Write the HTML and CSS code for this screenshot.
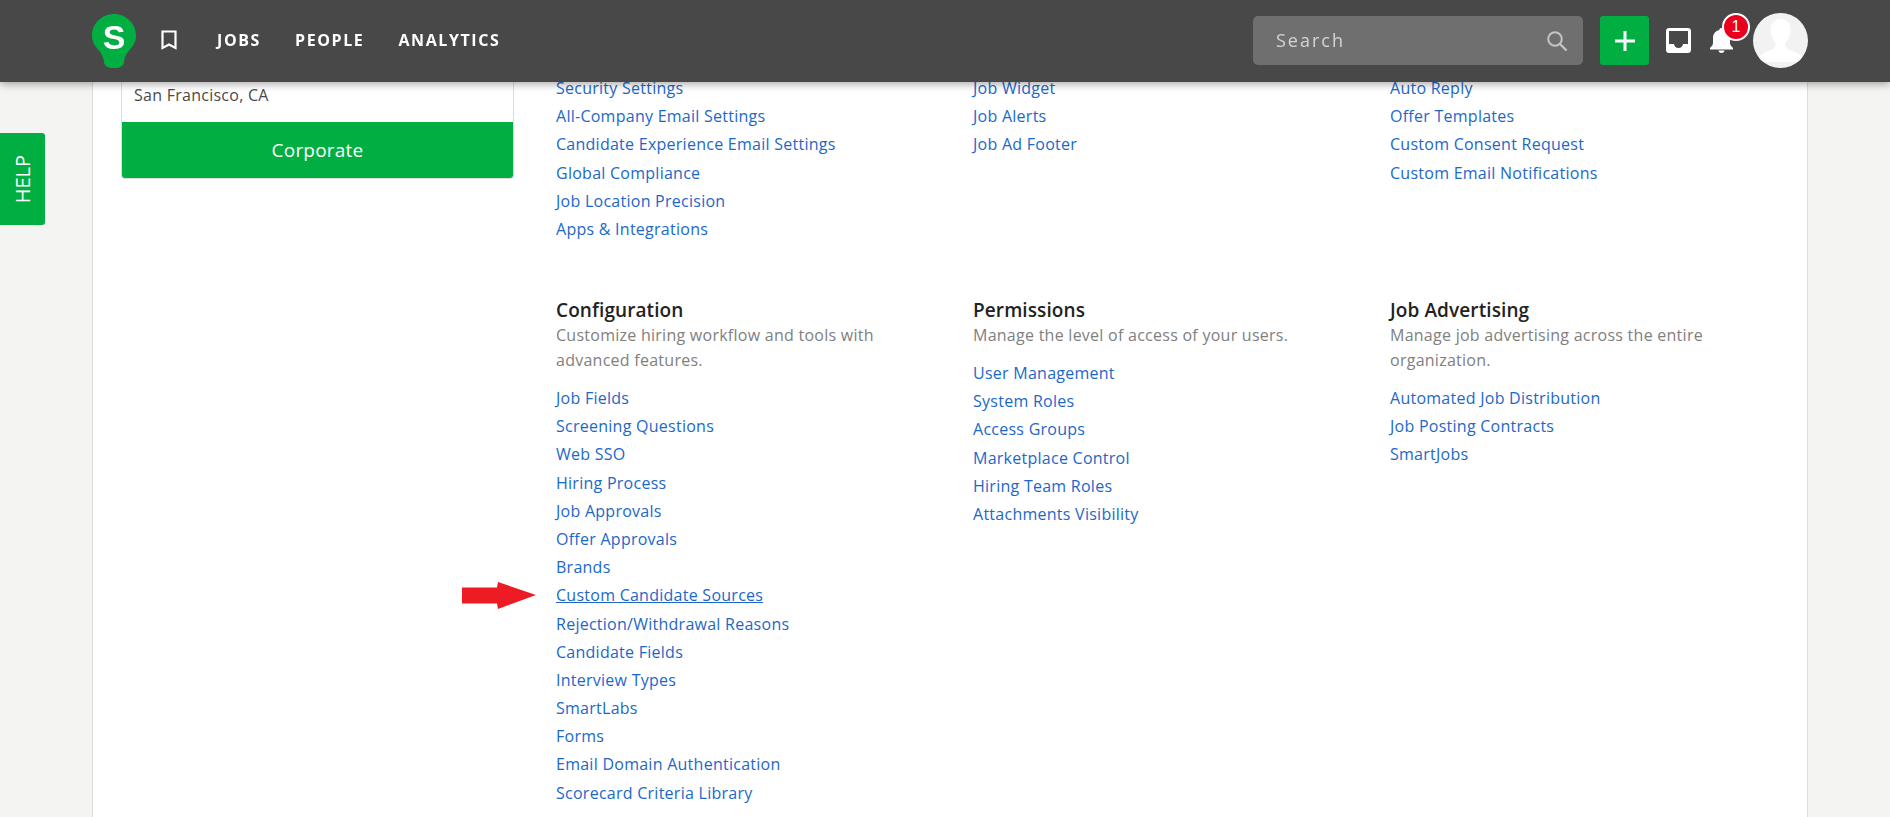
FILE: index.html
```html
<!DOCTYPE html>
<html lang="en">
<head>
<meta charset="utf-8">
<title>Settings</title>
<link rel="stylesheet" href="styles.css">
</head>
<body>
<header class="topbar">
  <div class="topbar-left">
    <svg class="logo" viewBox="0 0 44 54" aria-hidden="true"><path fill="#00ae42" d="M22 0C9.800 0 0 9.600 0 21.500C0 27.500 2.500 31.500 6 35.500C9.500 39.500 11.200 42.500 12 48C12.500 52 15.500 54 22 54C28.500 54 31.500 52 32 48C32.800 42.500 34.500 39.500 38 35.500C41.500 31.500 44 27.500 44 21.500C44 9.600 34.200 0 22 0Z"/><text x="22" y="34.500" text-anchor="middle" class="logo-s">S</text></svg>
    <svg class="bookmark" viewBox="0 0 16 20" aria-hidden="true"><path fill="none" stroke="#fff" stroke-width="2.200" d="M1.500 1.500H14.500V18L8 14.500L1.500 18Z"/></svg>
    <nav class="nav">
      <a>JOBS</a>
      <a>PEOPLE</a>
      <a>ANALYTICS</a>
    </nav>
  </div>
  <div class="topbar-right">
    <div class="search">
      <span>Search</span>
      <svg viewBox="0 0 22 22" aria-hidden="true"><circle cx="9" cy="9" r="6.800" fill="none" stroke="#c4c4c4" stroke-width="2"/><path d="M14 14L20.500 20.500" stroke="#c4c4c4" stroke-width="2.400"/></svg>
    </div>
    <button class="add"><svg viewBox="0 0 20 20" aria-hidden="true"><path d="M10 0V20M0 10H20" stroke="#fff" stroke-width="3"/></svg></button>
    <svg class="inbox" viewBox="0 0 25 25" aria-hidden="true"><path fill="#fff" fill-rule="evenodd" d="M3 0H22C23.700 0 25 1.300 25 3V22C25 23.700 23.700 25 22 25H3C1.300 25 0 23.700 0 22V3C0 1.300 1.300 0 3 0ZM3 3V16H8C8.500 18.500 10 20 12.500 20C15 20 16.500 18.500 17 16H22V3Z"/></svg>
    <div class="bell-wrap">
      <svg class="bell" viewBox="0 0 23 25" aria-hidden="true"><path fill="#fff" d="M11.500 0C12.800 0 13.600 .8 13.700 2C17.800 3 20 6 20 10V15C20 17 21.500 18.500 23 20V21.500H0V20C1.500 18.500 3 17 3 15V10C3 6 5.200 3 9.300 2C9.400 .8 10.200 0 11.500 0ZM8.500 22.500H14.500C14.500 24 13.200 25 11.500 25C9.800 25 8.500 24 8.500 22.500Z"/></svg>
      <span class="badge">1</span>
    </div>
    <div class="avatar">
      <svg viewBox="0 0 55 55" aria-hidden="true"><path fill="#fff" d="M27.500 6C34.500 6 37.500 11 37.500 17C37.500 22 35.500 27 32.500 30C32 33 33 35 37 37C43 39 49 41 51 49H4C6 41 12 39 18 37C22 35 23 33 22.500 30C19.500 27 17.500 22 17.500 17C17.500 11 20.500 6 27.500 6Z"/></svg>
    </div>
  </div>
</header>

<aside class="help"><span>HELP</span></aside>

<main class="panel">
  <div class="sidebar">
    <div class="card">
      <p class="card-location">San Francisco, CA</p>
      <div class="card-tag">Corporate</div>
    </div>
  </div>
  <div class="settings">
    <section class="group group-cut">
      <ul class="links">
        <li><a>Security Settings</a></li>
        <li><a>All-Company Email Settings</a></li>
        <li><a>Candidate Experience Email Settings</a></li>
        <li><a>Global Compliance</a></li>
        <li><a>Job Location Precision</a></li>
        <li><a>Apps &amp; Integrations</a></li>
      </ul>
    </section>
    <section class="group group-cut">
      <ul class="links">
        <li><a>Job Widget</a></li>
        <li><a>Job Alerts</a></li>
        <li><a>Job Ad Footer</a></li>
      </ul>
    </section>
    <section class="group group-cut">
      <ul class="links">
        <li><a>Auto Reply</a></li>
        <li><a>Offer Templates</a></li>
        <li><a>Custom Consent Request</a></li>
        <li><a>Custom Email Notifications</a></li>
      </ul>
    </section>

    <section class="group">
      <h2>Configuration</h2>
      <p>Customize hiring workflow and tools with advanced features.</p>
      <ul class="links">
        <li><a>Job Fields</a></li>
        <li><a>Screening Questions</a></li>
        <li><a>Web SSO</a></li>
        <li><a>Hiring Process</a></li>
        <li><a>Job Approvals</a></li>
        <li><a>Offer Approvals</a></li>
        <li><a>Brands</a></li>
        <li class="marked">
          <svg class="arrow" viewBox="0 0 74 27" aria-hidden="true"><path fill="#ed1c24" d="M0 5.500H35L36 0L74 13L36 27L35 21.500H0Z"/></svg>
          <a class="current">Custom Candidate Sources</a>
        </li>
        <li><a>Rejection/Withdrawal Reasons</a></li>
        <li><a>Candidate Fields</a></li>
        <li><a>Interview Types</a></li>
        <li><a>SmartLabs</a></li>
        <li><a>Forms</a></li>
        <li><a>Email Domain Authentication</a></li>
        <li><a>Scorecard Criteria Library</a></li>
      </ul>
    </section>
    <section class="group">
      <h2>Permissions</h2>
      <p>Manage the level of access of your users.</p>
      <ul class="links">
        <li><a>User Management</a></li>
        <li><a>System Roles</a></li>
        <li><a>Access Groups</a></li>
        <li><a>Marketplace Control</a></li>
        <li><a>Hiring Team Roles</a></li>
        <li><a>Attachments Visibility</a></li>
      </ul>
    </section>
    <section class="group">
      <h2>Job Advertising</h2>
      <p>Manage job advertising across the entire organization.</p>
      <ul class="links">
        <li><a>Automated Job Distribution</a></li>
        <li><a>Job Posting Contracts</a></li>
        <li><a>SmartJobs</a></li>
      </ul>
    </section>
  </div>
</main>
</body>
</html>
```

FILE: styles.css
```css
* { box-sizing: border-box; }

html, body {
  margin: 0;
  height: 817px;
  overflow: hidden;
}

body {
  background: #f4f4f2;
  font-family: "Open Sans", sans-serif;
  font-size: 16px;
  letter-spacing: 0.26px;
  color: #444;
}

.topbar {
  position: fixed;
  top: 0;
  left: 0;
  right: 0;
  z-index: 5;
  height: 82px;
  padding: 0 82px 1px 92px;
  display: flex;
  align-items: center;
  justify-content: space-between;
  background: #484848;
  box-shadow: 0 2px 8px rgba(0, 0, 0, 0.35);
}

.topbar-left,
.topbar-right,
.nav {
  display: flex;
  align-items: center;
}

.logo {
  width: 44px;
  height: 54px;
}

.logo-s {
  font-family: "Liberation Sans", sans-serif;
  font-weight: 700;
  font-size: 34px;
  letter-spacing: 0;
  fill: #fff;
}

.bookmark {
  width: 16px;
  height: 20px;
  margin-left: 25px;
  margin-bottom: 2px;
}

.nav {
  gap: 34px;
  margin-left: 40px;
  margin-bottom: 2px;
  color: #fff;
  font-size: 16px;
  font-weight: 700;
  letter-spacing: 1.600px;
}

.search {
  width: 330px;
  height: 49px;
  padding: 0 15px 0 23px;
  display: flex;
  align-items: center;
  justify-content: space-between;
  border-radius: 5px;
  background: #6f6f6f;
  color: #d4d4d4;
  font-size: 18px;
  letter-spacing: 2px;
}

.search span {
  margin-bottom: 1px;
}

.search svg {
  width: 22px;
  height: 22px;
}

.add {
  width: 49px;
  height: 49px;
  margin-left: 17px;
  padding: 0;
  display: flex;
  align-items: center;
  justify-content: center;
  border: 0;
  border-radius: 3px;
  background: #00ae42;
}

.add svg {
  width: 20px;
  height: 20px;
}

.inbox {
  width: 25px;
  height: 25px;
  margin-left: 17px;
}

.bell-wrap {
  position: relative;
  width: 23px;
  height: 25px;
  margin-left: 19px;
}

.bell {
  display: block;
  width: 23px;
  height: 25px;
}

.badge {
  position: absolute;
  top: -15px;
  left: 12px;
  width: 28px;
  height: 28px;
  display: flex;
  align-items: center;
  justify-content: center;
  border: 2px solid #fff;
  border-radius: 50%;
  background: #e8001c;
  color: #fff;
  font-family: "Liberation Sans", sans-serif;
  font-size: 16px;
  letter-spacing: 0;
}

.avatar {
  width: 55px;
  height: 55px;
  margin-left: 20px;
  border-radius: 50%;
  background: #f2f2f2;
  overflow: hidden;
}

.avatar svg {
  display: block;
  width: 55px;
  height: 55px;
}

.help {
  position: fixed;
  top: 133px;
  left: 0;
  width: 45px;
  height: 92px;
  display: flex;
  align-items: center;
  justify-content: center;
  border-radius: 0 3px 3px 0;
  background: #00ae42;
  color: #fff;
  font-size: 20px;
  letter-spacing: 0;
}

.help span {
  writing-mode: vertical-rl;
  transform: rotate(180deg);
}

.panel {
  width: 1716px;
  height: 817px;
  margin-left: 92px;
  padding: 74px 0 0 28px;
  display: flex;
  border-left: 1px solid #dcdcdc;
  border-right: 1px solid #dcdcdc;
  background: #fff;
}

.sidebar {
  width: 393px;
  flex: none;
}

.card {
  border: 1px solid #dcdcdc;
  border-radius: 3px;
  background: #fff;
}

.card-location {
  margin: 0;
  padding: 8px 12px 0;
  height: 47px;
  line-height: 24px;
  color: #4a4a4a;
}

.card-tag {
  height: 56px;
  margin: 0;
  display: flex;
  align-items: center;
  justify-content: center;
  border-radius: 0 0 3px 3px;
  background: #00ae42;
  color: #fff;
  font-size: 19px;
  letter-spacing: 0.2px;
}

.settings {
  width: 1251px;
  flex: none;
  margin-left: 42px;
  display: grid;
  grid-template-columns: repeat(3, 417px);
  align-content: start;
}

.group {
  padding-right: 60px;
}

.group-cut {
  height: 223px;
}

h2 {
  margin: 0;
  font-size: 19px;
  font-weight: 600;
  line-height: 26px;
  letter-spacing: 0.1px;
  color: #222;
}

.group p {
  margin: 0 0 11px;
  line-height: 25px;
  color: #808080;
}

.links {
  margin: 0;
  padding: 0;
  list-style: none;
}

.links li {
  height: 28.200px;
  line-height: 28px;
  white-space: nowrap;
}

.links a {
  color: #1c68c9;
}

.links a.current {
  text-decoration: underline;
}

.marked {
  position: relative;
}

.arrow {
  position: absolute;
  top: 1px;
  left: -94px;
  width: 74px;
  height: 27px;
}
```
